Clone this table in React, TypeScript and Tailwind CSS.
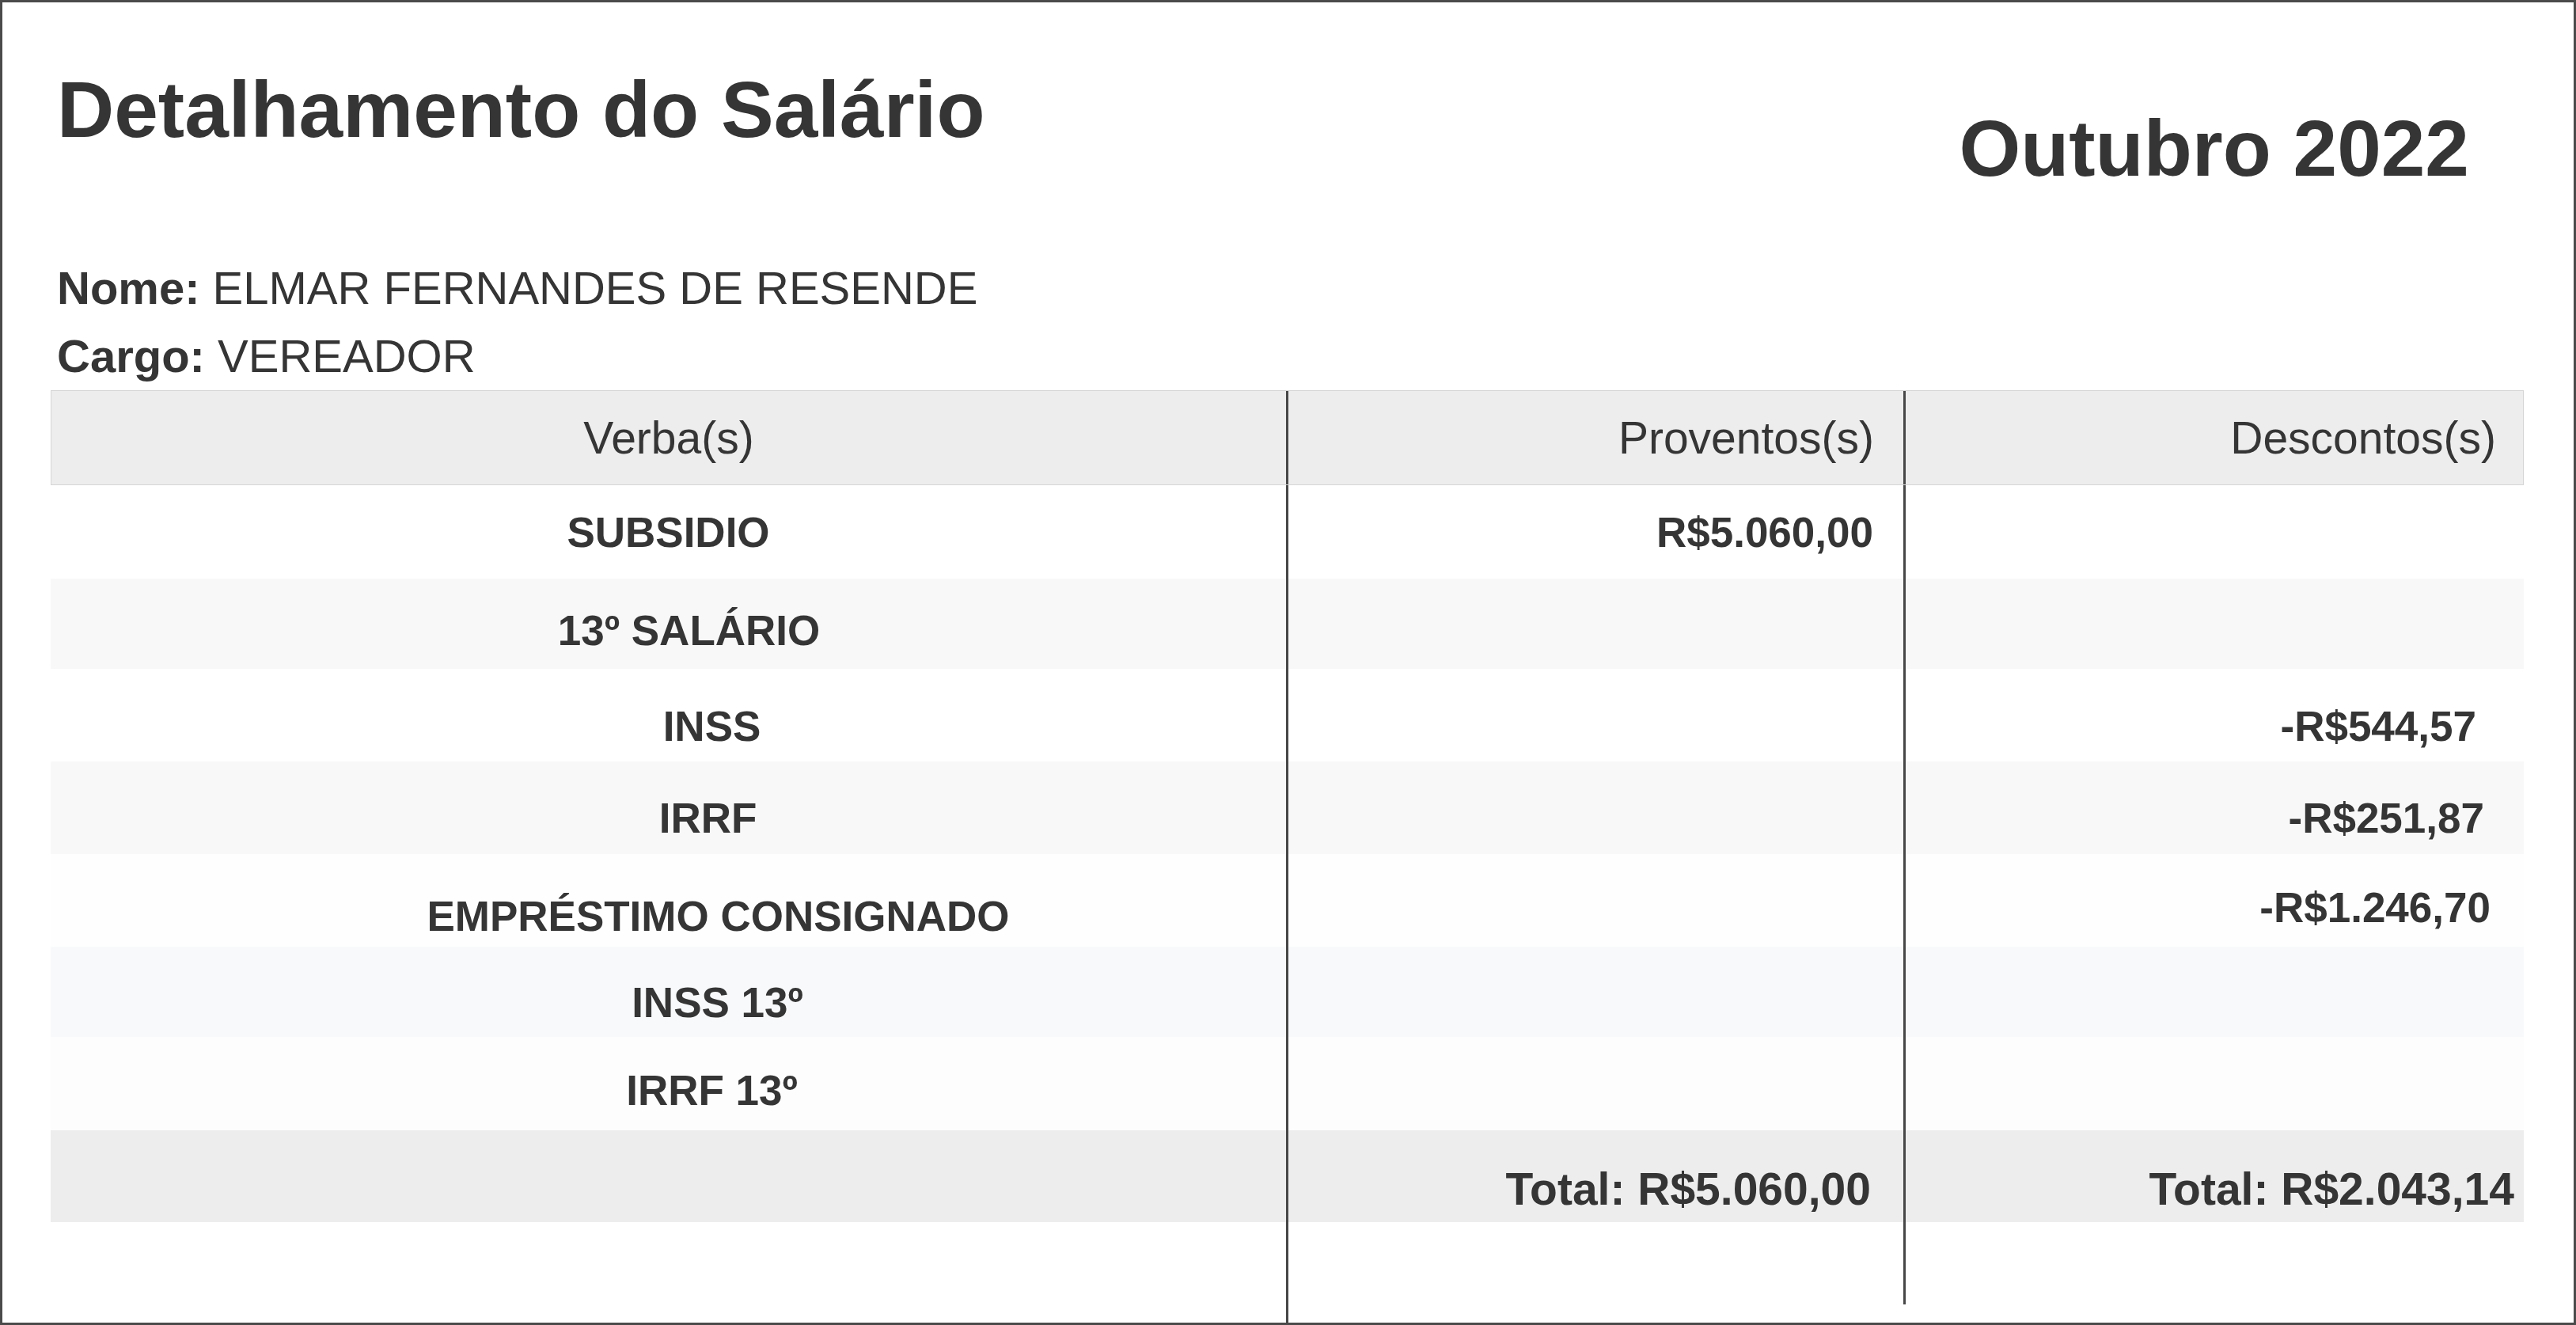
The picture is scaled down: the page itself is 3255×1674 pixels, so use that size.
import React from 'react';

type Row = {
  verba: string;
  verbaCls: string;
  prov?: string;
  provCls?: string;
  desc?: string;
  descCls?: string;
  rowCls: string;
};

const rows: Row[] = [
  { verba: 'SUBSIDIO', verbaCls: 'pl-0 pt-0', prov: 'R$5.060,00', provCls: 'pr-[38px] pt-0', rowCls: 'h-[118px] bg-white' },
  { verba: '13º SALÁRIO', verbaCls: 'pl-[52px] pt-[16px]', rowCls: 'h-[114px] bg-[#f8f8f8]' },
  { verba: 'INSS', verbaCls: 'pl-[110px] pt-[28px]', desc: '-R$544,57', descCls: 'pr-[60px] pt-[28px]', rowCls: 'h-[117px] bg-white' },
  { verba: 'IRRF', verbaCls: 'pl-[100px] pt-[26px]', desc: '-R$251,87', descCls: 'pr-[50px] pt-[26px]', rowCls: 'h-[117px] bg-[#f8f8f8]' },
  { verba: 'EMPRÉSTIMO CONSIGNADO', verbaCls: 'pl-[126px] pt-[40px]', desc: '-R$1.246,70', descCls: 'pr-[42px] pt-[18px]', rowCls: 'h-[117px] bg-[#fefefe]' },
  { verba: 'INSS 13º', verbaCls: 'pl-[124px] pt-[26px]', rowCls: 'h-[114px] bg-[#f8f9fa]' },
  { verba: 'IRRF 13º', verbaCls: 'pl-[110px] pt-[16px]', rowCls: 'h-[118px] bg-[#fdfdfd]' },
];

export default function App() {
  return (
    <div className="w-[3255px] h-[1674px] overflow-hidden border-[3px] border-[#4b4b4b] bg-white text-[#353535] font-['Liberation_Sans',Arial,sans-serif]">
      {/* title + month */}
      <div className="flex items-start justify-between pl-[69px] pr-[132px]">
        <h1 className="mt-[85px] text-[100px] font-bold leading-none">Detalhamento do Salário</h1>
        <div className="mt-[134px] text-[100px] font-bold leading-none">Outubro 2022</div>
      </div>

      {/* employee info */}
      <div className="mt-[98px] pl-[69px] text-[58px] leading-none">
        <p>
          <span className="font-bold">Nome:</span> ELMAR FERNANDES DE RESENDE
        </p>
        <p className="mt-[28px]">
          <span className="font-bold">Cargo:</span> VEREADOR
        </p>
      </div>

      {/* table */}
      <div className="mt-[14px] ml-[61px] w-[3125px] text-[57px] leading-none">
        <div className="grid h-[120px] grid-cols-[1560px_780px_1fr] border border-[#d5d5d5] bg-[#ededed]">
          <div className="flex items-center justify-center">Verba(s)</div>
          <div className="flex items-center justify-end border-l-[3px] border-l-[#474747] pr-[37px]">Proventos(s)</div>
          <div className="flex items-center justify-end border-l-[3px] border-l-[#474747] pr-[34px]">Descontos(s)</div>
        </div>

        {rows.map((r) => (
          <div key={r.verba} className={`grid grid-cols-[1561px_780px_1fr] text-[53px] font-bold ${r.rowCls}`}>
            <div className={`flex items-center justify-center ${r.verbaCls}`}>{r.verba}</div>
            <div className={`flex items-center justify-end border-l-[3px] border-l-[#474747] ${r.provCls ?? ''}`}>{r.prov}</div>
            <div className={`flex items-center justify-end border-l-[3px] border-l-[#474747] ${r.descCls ?? ''}`}>{r.desc}</div>
          </div>
        ))}

        {/* totals */}
        <div className="grid h-[116px] grid-cols-[1561px_780px_1fr] bg-[#ededed] font-bold">
          <div />
          <div className="flex items-center justify-end border-l-[3px] border-l-[#474747] pr-[41px] pt-[32px]">Total: R$5.060,00</div>
          <div className="flex items-center justify-end border-l-[3px] border-l-[#474747] pr-[12px] pt-[32px]">Total: R$2.043,14</div>
        </div>

        {/* column rules running past the table */}
        <div className="grid h-[104px] grid-cols-[1561px_780px_1fr]">
          <div />
          <div className="border-l-[3px] border-l-[#474747]" />
          <div className="border-l-[3px] border-l-[#474747]" />
        </div>
        <div className="grid h-[30px] grid-cols-[1561px_780px_1fr]">
          <div />
          <div className="border-l-[3px] border-l-[#474747]" />
          <div />
        </div>
      </div>
    </div>
  );
}
